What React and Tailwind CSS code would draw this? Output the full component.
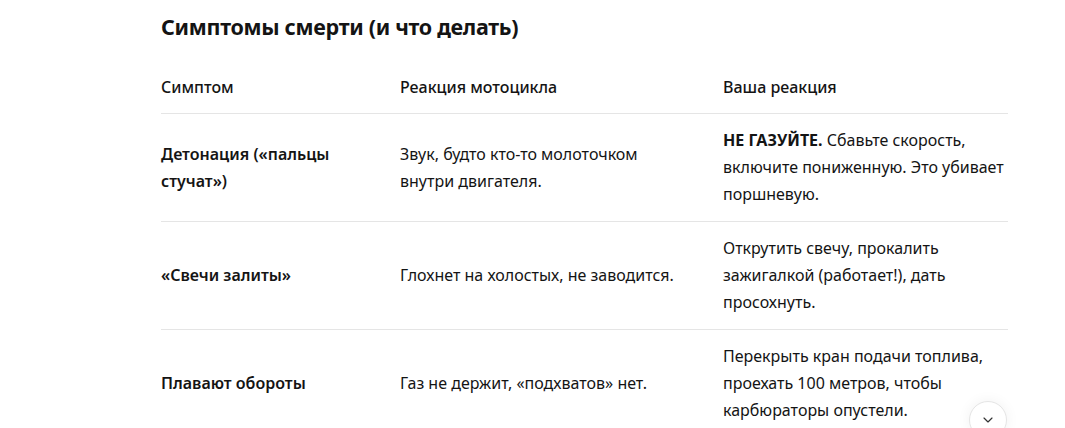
import { ChevronDown } from "lucide-react";

const rows = [
    {
        symptom: "Детонация («пальцы стучат»)",
        bike: "Звук, будто кто-то молоточком внутри двигателя.",
        action: (
            <>
                <strong className="font-bold">НЕ ГАЗУЙТЕ.</strong> Сбавьте скорость, включите пониженную. Это убивает поршневую.
            </>
        ),
    },
    {
        symptom: "«Свечи залиты»",
        bike: "Глохнет на холостых, не заводится.",
        action: "Открутить свечу, прокалить зажигалкой (работает!), дать просохнуть.",
    },
    {
        symptom: "Плавают обороты",
        bike: "Газ не держит, «подхватов» нет.",
        action: "Перекрыть кран подачи топлива, проехать 100 метров, чтобы карбюраторы опустели.",
    },
];

export default function App() {
    return (
        <div className="relative h-[428px] overflow-hidden bg-white text-[#141414]" style={{ fontFamily: '"Noto Sans", "Open Sans", sans-serif' }}>
            <div className="ml-[161px] w-[847px] pt-[11px]">
                <h2 className="text-[21.5px] font-bold leading-[32px] tracking-[-0.3px]">Симптомы смерти (и что делать)</h2>

                <div className="mt-[16px] grid grid-cols-[239px_323px_1fr] text-[16px] leading-[27px]">
                    <div className="border-b border-[#e5e5e5] pt-[15px] pb-[12px] font-medium">Симптом</div>
                    <div className="border-b border-[#e5e5e5] pt-[15px] pb-[12px] font-medium">Реакция мотоцикла</div>
                    <div className="border-b border-[#e5e5e5] pt-[15px] pb-[12px] font-medium">Ваша реакция</div>

                    {rows.map((row, i) => (
                        <div key={i} className="contents">
                            <div className="flex items-center border-b border-[#e5e5e5] py-[13px] pr-6 font-semibold">{row.symptom}</div>
                            <div className="flex items-center border-b border-[#e5e5e5] py-[13px] pr-8">{row.bike}</div>
                            <div className="flex items-center border-b border-[#e5e5e5] py-[13px]">
                                <p>{row.action}</p>
                            </div>
                        </div>
                    ))}
                </div>
            </div>

            <button className="absolute left-[969px] top-[401px] flex h-[38px] w-[38px] items-center justify-center rounded-full border border-[#e5e5e5] bg-white shadow-[0_0_14px_rgba(0,0,0,0.06)]">
                <ChevronDown size={16} strokeWidth={1.75} className="text-[#333]" />
            </button>
        </div>
    );
}
